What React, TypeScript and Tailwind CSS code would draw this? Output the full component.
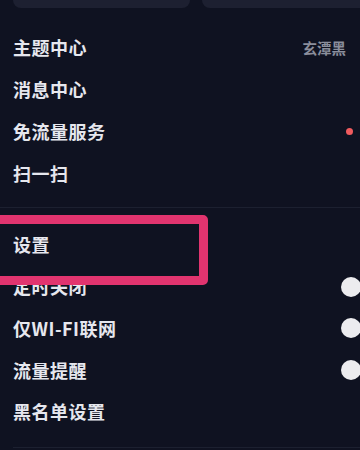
export default function App() {
  const font = { fontFamily: '"Noto Sans CJK SC", "Noto Sans", sans-serif' };

  const Row = ({
    label,
    right,
  }: {
    label: string;
    right?: React.ReactNode;
  }) => (
    <div className="flex items-center justify-between h-[41.75px] pl-[13px]">
      <span className="text-[18px] font-semibold text-[#e6e7ee] tracking-[0.5px]">
        {label}
      </span>
      {right}
    </div>
  );

  const Knob = () => (
    <div className="w-[20px] h-[20px] shrink-0 rounded-full bg-[#ececef] -mr-[1px]" />
  );

  return (
    <div
      className="relative w-[360px] h-[450px] overflow-hidden bg-[#0f1221]"
      style={font}
    >
      {/* cards on top */}
      <div className="flex gap-[12px] pl-[13px] -mt-[20px]">
        <div className="w-[177px] h-[28px] shrink-0 rounded-[8px] bg-[#1d2031]" />
        <div className="w-[177px] h-[28px] shrink-0 rounded-[8px] bg-[#1d2031]" />
      </div>

      <div className="mt-[19px]">
        <Row
          label="主题中心"
          right={
            <span className="text-[14.5px] font-semibold text-[#8b8e9c] pr-[14px]">
              玄潭黑
            </span>
          }
        />
        <Row label="消息中心" />
        <Row
          label="免流量服务"
          right={
            <div className="w-[7px] h-[7px] rounded-full bg-[#f05b5e] mr-[7px]" />
          }
        />
        <Row label="扫一扫" />
      </div>

      <div className="mt-[13px] h-px bg-[#1c2030]" />

      <div className="mt-[16px]">
        <Row label="设置" />
        <Row label="定时关闭" right={<Knob />} />
        <Row label="仅WI-FI联网" right={<Knob />} />
        <Row label="流量提醒" right={<Knob />} />
        <Row label="黑名单设置" />
      </div>

      <div className="mt-[14px] ml-[13px] h-px bg-[#1c2030]" />

      {/* highlight box */}
      <div className="absolute left-[-10px] top-[215px] w-[218px] h-[70px] rounded-[5px] border-[9px] border-[#e1346f]" />
    </div>
  );
}
